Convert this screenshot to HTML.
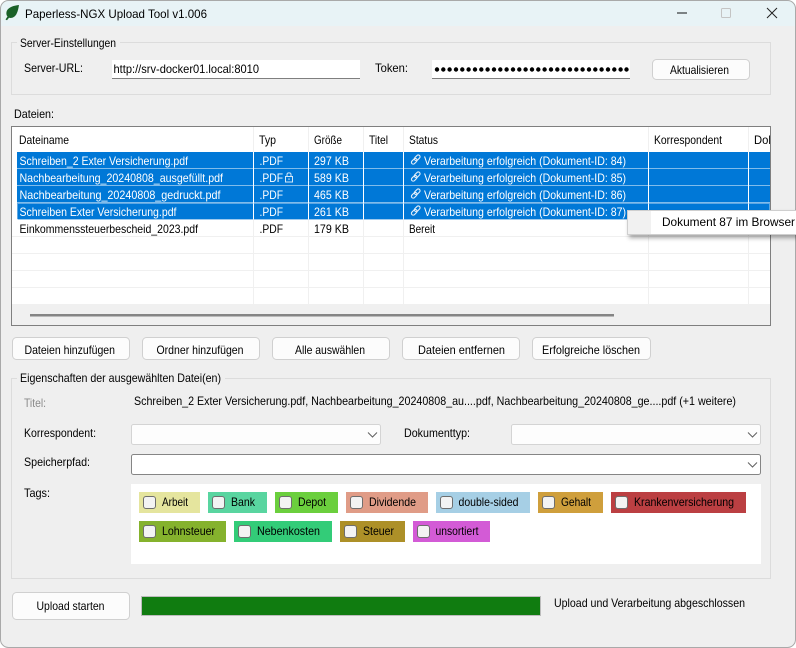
<!DOCTYPE html>
<html lang="de"><head><meta charset="utf-8"><title>Paperless-NGX Upload Tool v1.006</title>
<style>
html,body{margin:0;padding:0;width:796px;height:648px;overflow:hidden;background:#fff}
svg{display:block}
text{font-family:"Liberation Sans",sans-serif;font-size:12px;fill:#000;white-space:pre}
.w{fill:#fff}
.g{fill:#8a8a8a}
.btn{fill:#fcfcfc;stroke:#d0d0d0;stroke-width:1}
.cb{fill:#f3f3f3;stroke:#6e6e6e;stroke-width:1}
.hl{stroke:#f0f0f0;stroke-width:1}
.wl{stroke:#fff;stroke-width:1}
.chev{fill:none;stroke:#606060;stroke-width:1}
</style></head><body>
<svg xmlns="http://www.w3.org/2000/svg" width="796" height="648" viewBox="0 0 796 648">
<defs>
<filter id="sh" x="-10%" y="-20%" width="120%" height="160%"><feDropShadow dx="2" dy="3" stdDeviation="2" flood-color="#000" flood-opacity=".35"/></filter>
<clipPath id="win"><rect x="0.5" y="0.5" width="795" height="647" rx="8"/></clipPath>
<clipPath id="listc"><rect x="12" y="127" width="758" height="198"/></clipPath>
<g id="lnk" fill="none" stroke="#e4eff9" stroke-width="1.100"><rect x="411" y="159.500" width="6.500" height="3.600" rx="1.800" transform="rotate(-45 414.250 161.300)"/><rect x="414" y="156" width="6.500" height="3.600" rx="1.800" transform="rotate(-45 417.250 157.800)"/></g>
</defs>
<rect width="796" height="648" fill="#fff"/>
<g clip-path="url(#win)">
<rect width="796" height="648" fill="#efefef"/>
<rect width="796" height="26" fill="#e8f3f6"/>
</g>
<rect x="0.5" y="0.5" width="795" height="647" rx="8" fill="none" stroke="#a9a9a9"/>

<!-- title bar -->
<path d="M19 5C14 5.500 9 7 7 10.500C5.800 13 6.500 15.500 7.500 16.500L5.500 19.500L7 20.300L9 17.800C12 18.500 15 17 16.500 14C18 11 18.500 8 19 5Z" fill="#1a6128"/>
<text x="25" y="18" textLength="182" lengthAdjust="spacingAndGlyphs">Paperless-NGX Upload Tool v1.006</text>
<rect x="677" y="12.500" width="10" height="1" fill="#111"/>
<rect x="721.500" y="8.500" width="9" height="9" rx="1" fill="none" stroke="#c4c4c4"/>
<path d="M767 8L777 18M777 8L767 18" stroke="#222" stroke-width="1" fill="none"/>

<!-- server group -->
<rect x="11.500" y="42.500" width="759" height="52" fill="none" stroke="#dcdcdc"/>
<rect x="17" y="38" width="103" height="10" fill="#efefef"/>
<text x="20" y="47" textLength="96" lengthAdjust="spacingAndGlyphs">Server-Einstellungen</text>
<text x="24" y="72" textLength="59" lengthAdjust="spacingAndGlyphs">Server-URL:</text>
<rect x="112" y="60" width="248" height="19" fill="#fff"/>
<rect x="112" y="78" width="248" height="1" fill="#7f7f7f"/>
<text x="113.500" y="73" textLength="145.500" lengthAdjust="spacingAndGlyphs">http://srv-docker01.local:8010</text>
<text x="375" y="72" textLength="33" lengthAdjust="spacingAndGlyphs">Token:</text>
<rect x="432" y="60" width="198" height="19" fill="#fff"/>
<rect x="432" y="78" width="198" height="1" fill="#7f7f7f"/>
<g fill="#000">
<circle cx="437" cy="69.500" r="2.200"/><circle cx="443.300" cy="69.500" r="2.200"/><circle cx="449.600" cy="69.500" r="2.200"/><circle cx="456" cy="69.500" r="2.200"/><circle cx="462.300" cy="69.500" r="2.200"/><circle cx="468.600" cy="69.500" r="2.200"/><circle cx="475" cy="69.500" r="2.200"/><circle cx="481.300" cy="69.500" r="2.200"/><circle cx="487.600" cy="69.500" r="2.200"/><circle cx="494" cy="69.500" r="2.200"/><circle cx="500.300" cy="69.500" r="2.200"/><circle cx="506.600" cy="69.500" r="2.200"/><circle cx="513" cy="69.500" r="2.200"/><circle cx="519.300" cy="69.500" r="2.200"/><circle cx="525.600" cy="69.500" r="2.200"/><circle cx="532" cy="69.500" r="2.200"/><circle cx="538.300" cy="69.500" r="2.200"/><circle cx="544.600" cy="69.500" r="2.200"/><circle cx="551" cy="69.500" r="2.200"/><circle cx="557.300" cy="69.500" r="2.200"/><circle cx="563.600" cy="69.500" r="2.200"/><circle cx="570" cy="69.500" r="2.200"/><circle cx="576.300" cy="69.500" r="2.200"/><circle cx="582.600" cy="69.500" r="2.200"/><circle cx="589" cy="69.500" r="2.200"/><circle cx="595.300" cy="69.500" r="2.200"/><circle cx="601.600" cy="69.500" r="2.200"/><circle cx="608" cy="69.500" r="2.200"/><circle cx="614.300" cy="69.500" r="2.200"/><circle cx="620.600" cy="69.500" r="2.200"/><circle cx="626.500" cy="69.500" r="2.200"/>
</g>
<rect class="btn" x="652.500" y="59.500" width="97" height="20" rx="4"/>
<text x="670" y="74" textLength="59" lengthAdjust="spacingAndGlyphs">Aktualisieren</text>

<text x="14" y="118" textLength="40" lengthAdjust="spacingAndGlyphs">Dateien:</text>

<!-- list -->
<rect x="11.500" y="126.500" width="759" height="199" fill="#fff" stroke="#7f7f7f"/>
<g clip-path="url(#listc)">
<g fill="#0078d7">
<rect x="17" y="152" width="753" height="16.500"/>
<rect x="17" y="169" width="753" height="16.500"/>
<rect x="17" y="186" width="753" height="16.500"/>
<rect x="17" y="203" width="753" height="16.500"/>
</g>
<g class="hl">
<path d="M12 236.500H770M12 253.500H770M12 270.500H770M12 287.500H770M12 304.500H770"/>
<path d="M253.500 127V152M308.500 127V152M363.500 127V152M403.500 127V152M648.500 127V152M748.500 127V152"/>
<path d="M253.500 220V305M308.500 220V305M363.500 220V305M403.500 220V305M648.500 220V305M748.500 220V305"/>
</g>
<path class="wl" d="M253.500 152V220M308.500 152V220M363.500 152V220M403.500 152V220M648.500 152V220M748.500 152V220"/>
<rect x="17.500" y="203.500" width="752" height="16" fill="none" stroke="#bcd9f2" stroke-width="1" stroke-dasharray="1 1"/>
<rect x="12" y="305" width="758" height="20" fill="#f0f0f0"/>
<rect x="30" y="314" width="584" height="2.500" fill="#858585"/>

<text x="19" y="144" textLength="50" lengthAdjust="spacingAndGlyphs">Dateiname</text>
<text x="259" y="144" textLength="17" lengthAdjust="spacingAndGlyphs">Typ</text>
<text x="314" y="144" textLength="28" lengthAdjust="spacingAndGlyphs">Größe</text>
<text x="369" y="144" textLength="19" lengthAdjust="spacingAndGlyphs">Titel</text>
<text x="409" y="144" textLength="29" lengthAdjust="spacingAndGlyphs">Status</text>
<text x="654" y="144" textLength="68" lengthAdjust="spacingAndGlyphs">Korrespondent</text>
<text x="754" y="144" textLength="66" lengthAdjust="spacingAndGlyphs">Dokumenttyp</text>

<text class="w" x="19.500" y="165" textLength="168.500" lengthAdjust="spacingAndGlyphs">Schreiben_2 Exter Versicherung.pdf</text>
<text class="w" x="19.500" y="182" textLength="203.500" lengthAdjust="spacingAndGlyphs">Nachbearbeitung_20240808_ausgefüllt.pdf</text>
<text class="w" x="19.500" y="199" textLength="201" lengthAdjust="spacingAndGlyphs">Nachbearbeitung_20240808_gedruckt.pdf</text>
<text class="w" x="19.500" y="216" textLength="157" lengthAdjust="spacingAndGlyphs">Schreiben Exter Versicherung.pdf</text>
<text x="19.500" y="233" textLength="178.500" lengthAdjust="spacingAndGlyphs">Einkommenssteuerbescheid_2023.pdf</text>

<text class="w" x="259.500" y="165" textLength="23.500" lengthAdjust="spacingAndGlyphs">.PDF</text>
<text class="w" x="259.500" y="182" textLength="23.500" lengthAdjust="spacingAndGlyphs">.PDF</text>
<text class="w" x="259.500" y="199" textLength="23.500" lengthAdjust="spacingAndGlyphs">.PDF</text>
<text class="w" x="259.500" y="216" textLength="23.500" lengthAdjust="spacingAndGlyphs">.PDF</text>
<text x="259.500" y="233" textLength="23.500" lengthAdjust="spacingAndGlyphs">.PDF</text>
<!-- lock -->
<g fill="none" stroke="#d6e8f7" stroke-width="1"><rect x="285.500" y="176.500" width="7" height="5.500"/><path d="M287 176.500V174.500C287 172.300 291 172.300 291 174.500V176.500"/><path d="M289 178.300V180"/></g>

<text class="w" x="314" y="165" textLength="35" lengthAdjust="spacingAndGlyphs">297 KB</text>
<text class="w" x="314" y="182" textLength="35" lengthAdjust="spacingAndGlyphs">589 KB</text>
<text class="w" x="314" y="199" textLength="35" lengthAdjust="spacingAndGlyphs">465 KB</text>
<text class="w" x="314" y="216" textLength="35" lengthAdjust="spacingAndGlyphs">261 KB</text>
<text x="314" y="233" textLength="35" lengthAdjust="spacingAndGlyphs">179 KB</text>

<use href="#lnk"/>
<use href="#lnk" y="17"/>
<use href="#lnk" y="34"/>
<use href="#lnk" y="51"/>
<text class="w" x="424" y="165" textLength="202" lengthAdjust="spacingAndGlyphs">Verarbeitung erfolgreich (Dokument-ID: 84)</text>
<text class="w" x="424" y="182" textLength="202" lengthAdjust="spacingAndGlyphs">Verarbeitung erfolgreich (Dokument-ID: 85)</text>
<text class="w" x="424" y="199" textLength="202" lengthAdjust="spacingAndGlyphs">Verarbeitung erfolgreich (Dokument-ID: 86)</text>
<text class="w" x="424" y="216" textLength="202" lengthAdjust="spacingAndGlyphs">Verarbeitung erfolgreich (Dokument-ID: 87)</text>
<text x="409" y="233" textLength="26" lengthAdjust="spacingAndGlyphs">Bereit</text>
</g>

<!-- context menu -->
<rect x="627" y="210" width="180" height="25" fill="#fff" filter="url(#sh)"/>
<rect x="627" y="211" width="24" height="23" fill="#f1f1f1"/>
<path d="M796 210.500H627.500V234.500H796" fill="none" stroke="#cfcfcf"/>
<text x="662" y="226" textLength="133" lengthAdjust="spacingAndGlyphs">Dokument 87 im Browser</text>

<!-- buttons -->
<rect class="btn" x="12.500" y="337.500" width="117" height="22" rx="4"/>
<text x="24.500" y="354" textLength="90.500" lengthAdjust="spacingAndGlyphs">Dateien hinzufügen</text>
<rect class="btn" x="142.500" y="337.500" width="117" height="22" rx="4"/>
<text x="156.500" y="354" textLength="87" lengthAdjust="spacingAndGlyphs">Ordner hinzufügen</text>
<rect class="btn" x="272.500" y="337.500" width="117" height="22" rx="4"/>
<text x="295" y="354" textLength="70" lengthAdjust="spacingAndGlyphs">Alle auswählen</text>
<rect class="btn" x="402.500" y="337.500" width="117" height="22" rx="4"/>
<text x="418" y="354" textLength="87" lengthAdjust="spacingAndGlyphs">Dateien entfernen</text>
<rect class="btn" x="532.500" y="337.500" width="118" height="22" rx="4"/>
<text x="542" y="354" textLength="98" lengthAdjust="spacingAndGlyphs">Erfolgreiche löschen</text>

<!-- properties group -->
<rect x="11.500" y="378.500" width="759" height="200" fill="none" stroke="#dcdcdc"/>
<rect x="17" y="373" width="208" height="11" fill="#efefef"/>
<text x="20" y="382" textLength="201" lengthAdjust="spacingAndGlyphs">Eigenschaften der ausgewählten Datei(en)</text>
<text class="g" x="24" y="407" textLength="22" lengthAdjust="spacingAndGlyphs">Titel:</text>
<text x="134" y="405" textLength="602" lengthAdjust="spacingAndGlyphs">Schreiben_2 Exter Versicherung.pdf, Nachbearbeitung_20240808_au....pdf, Nachbearbeitung_20240808_ge....pdf (+1 weitere)</text>

<text x="24" y="437" textLength="72" lengthAdjust="spacingAndGlyphs">Korrespondent:</text>
<rect x="131.500" y="424.500" width="249" height="20" rx="2" fill="#fdfdfd" stroke="#d4d4d4"/>
<path class="chev" d="M368 432.500L372.500 437L377 432.500"/>
<text x="404" y="437" textLength="66" lengthAdjust="spacingAndGlyphs">Dokumenttyp:</text>
<rect x="511.500" y="424.500" width="249" height="20" rx="2" fill="#fdfdfd" stroke="#d4d4d4"/>
<path class="chev" d="M748 432.500L752.500 437L757 432.500"/>
<text x="24" y="466" textLength="66" lengthAdjust="spacingAndGlyphs">Speicherpfad:</text>
<rect x="131.500" y="454.500" width="629" height="20" rx="2" fill="#fff" stroke="#858585"/>
<path class="chev" d="M748 462.500L752.500 467L757 462.500"/>
<text x="24" y="497" textLength="26" lengthAdjust="spacingAndGlyphs">Tags:</text>

<rect x="131" y="484" width="630" height="80" fill="#fff"/>

<rect x="139" y="492" width="61" height="21" fill="#e5e59e"/>
<rect class="cb" x="143.500" y="496.500" width="12" height="12" rx="2.500"/>
<text x="162" y="506" textLength="26" lengthAdjust="spacingAndGlyphs">Arbeit</text>
<rect x="208" y="492" width="59" height="21" fill="#59d5a0"/>
<rect class="cb" x="212.500" y="496.500" width="12" height="12" rx="2.500"/>
<text x="231" y="506" textLength="24" lengthAdjust="spacingAndGlyphs">Bank</text>
<rect x="275" y="492" width="63" height="21" fill="#6bcf3d"/>
<rect class="cb" x="279.500" y="496.500" width="12" height="12" rx="2.500"/>
<text x="298" y="506" textLength="28" lengthAdjust="spacingAndGlyphs">Depot</text>
<rect x="346" y="492" width="82" height="21" fill="#e09c87"/>
<rect class="cb" x="350.500" y="496.500" width="12" height="12" rx="2.500"/>
<text x="369" y="506" textLength="47" lengthAdjust="spacingAndGlyphs">Dividende</text>
<rect x="436" y="492" width="94" height="21" fill="#a6cfe5"/>
<rect class="cb" x="440.500" y="496.500" width="12" height="12" rx="2.500"/>
<text x="458.500" y="506" textLength="60" lengthAdjust="spacingAndGlyphs">double-sided</text>
<rect x="538" y="492" width="65" height="21" fill="#cf9f3c"/>
<rect class="cb" x="542.500" y="496.500" width="12" height="12" rx="2.500"/>
<text x="561" y="506" textLength="30" lengthAdjust="spacingAndGlyphs">Gehalt</text>
<rect x="611" y="492" width="135" height="21" fill="#bb3f42"/>
<rect class="cb" x="615.500" y="496.500" width="12" height="12" rx="2.500"/>
<text x="634" y="506" textLength="100" lengthAdjust="spacingAndGlyphs">Krankenversicherung</text>

<rect x="139" y="521" width="87" height="21" fill="#85b22d"/>
<rect class="cb" x="143.500" y="525.500" width="12" height="12" rx="2.500"/>
<text x="162" y="535" textLength="53" lengthAdjust="spacingAndGlyphs">Lohnsteuer</text>
<rect x="234" y="521" width="98" height="21" fill="#33cc78"/>
<rect class="cb" x="238.500" y="525.500" width="12" height="12" rx="2.500"/>
<text x="257" y="535" textLength="63" lengthAdjust="spacingAndGlyphs">Nebenkosten</text>
<rect x="340" y="521" width="65" height="21" fill="#ad9028"/>
<rect class="cb" x="344.500" y="525.500" width="12" height="12" rx="2.500"/>
<text x="363" y="535" textLength="31" lengthAdjust="spacingAndGlyphs">Steuer</text>
<rect x="413" y="521" width="77" height="21" fill="#d35bd6"/>
<rect class="cb" x="417.500" y="525.500" width="12" height="12" rx="2.500"/>
<text x="435.500" y="535" textLength="43" lengthAdjust="spacingAndGlyphs">unsortiert</text>

<!-- bottom -->
<rect class="btn" x="12.500" y="592.500" width="117" height="27" rx="4"/>
<text x="36.500" y="610" textLength="68" lengthAdjust="spacingAndGlyphs">Upload starten</text>
<rect x="141.500" y="596.500" width="399" height="19" fill="#107c10" stroke="#bcbcbc"/>
<text x="554" y="607" textLength="191" lengthAdjust="spacingAndGlyphs">Upload und Verarbeitung abgeschlossen</text>
</svg>
</body></html>
